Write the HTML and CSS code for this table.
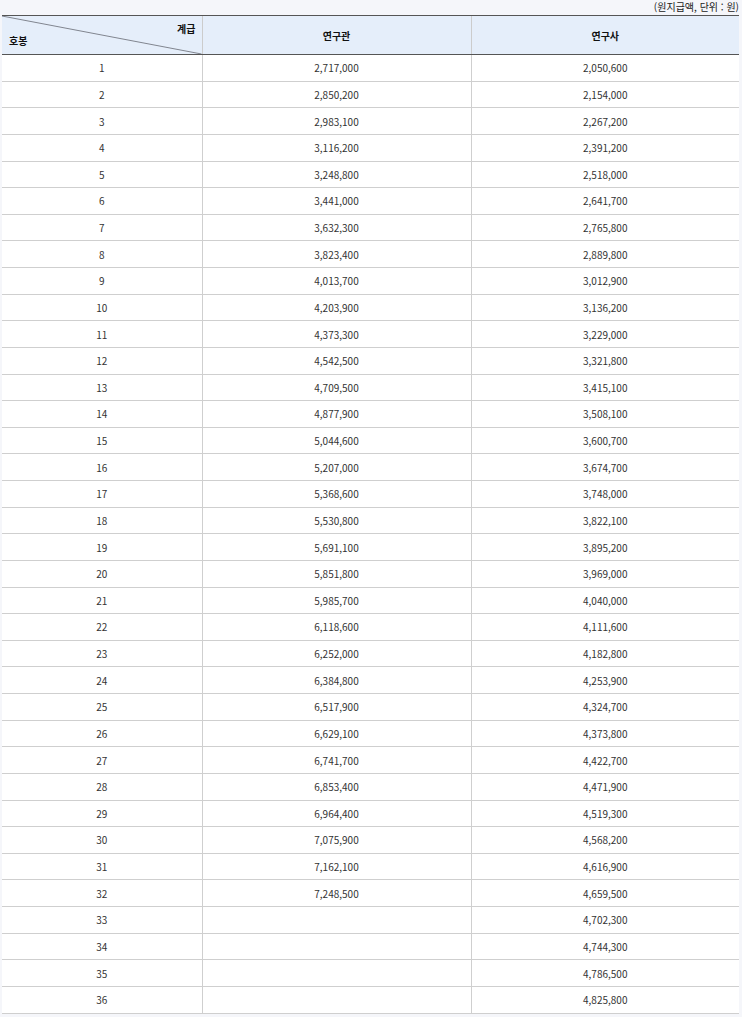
FILE: index.html
```html
<!DOCTYPE html>
<html lang="ko">
<head>
<meta charset="utf-8">
<link rel="stylesheet" href="styles.css">
</head>
<body>
<div class="wrap">
  <div class="unit">(원지급액, 단위 : 원)</div>
  <table class="pay">
    <colgroup><col class="c1"><col class="c2"><col class="c3"></colgroup>
    <thead>
      <tr>
        <th class="diag">
          <svg class="slash" viewBox="0 0 200 38" preserveAspectRatio="none" aria-hidden="true"><line x1="0" y1="0" x2="200" y2="38" stroke="#80858f" stroke-width="1" vector-effect="non-scaling-stroke"/></svg>
          <span class="top">계급</span><span class="bottom">호봉</span>
        </th>
        <th>연구관</th>
        <th>연구사</th>
      </tr>
    </thead>
    <tbody>
      <tr><td>1</td><td>2,717,000</td><td>2,050,600</td></tr>
      <tr><td>2</td><td>2,850,200</td><td>2,154,000</td></tr>
      <tr><td>3</td><td>2,983,100</td><td>2,267,200</td></tr>
      <tr><td>4</td><td>3,116,200</td><td>2,391,200</td></tr>
      <tr><td>5</td><td>3,248,800</td><td>2,518,000</td></tr>
      <tr><td>6</td><td>3,441,000</td><td>2,641,700</td></tr>
      <tr><td>7</td><td>3,632,300</td><td>2,765,800</td></tr>
      <tr><td>8</td><td>3,823,400</td><td>2,889,800</td></tr>
      <tr><td>9</td><td>4,013,700</td><td>3,012,900</td></tr>
      <tr><td>10</td><td>4,203,900</td><td>3,136,200</td></tr>
      <tr><td>11</td><td>4,373,300</td><td>3,229,000</td></tr>
      <tr><td>12</td><td>4,542,500</td><td>3,321,800</td></tr>
      <tr><td>13</td><td>4,709,500</td><td>3,415,100</td></tr>
      <tr><td>14</td><td>4,877,900</td><td>3,508,100</td></tr>
      <tr><td>15</td><td>5,044,600</td><td>3,600,700</td></tr>
      <tr><td>16</td><td>5,207,000</td><td>3,674,700</td></tr>
      <tr><td>17</td><td>5,368,600</td><td>3,748,000</td></tr>
      <tr><td>18</td><td>5,530,800</td><td>3,822,100</td></tr>
      <tr><td>19</td><td>5,691,100</td><td>3,895,200</td></tr>
      <tr><td>20</td><td>5,851,800</td><td>3,969,000</td></tr>
      <tr><td>21</td><td>5,985,700</td><td>4,040,000</td></tr>
      <tr><td>22</td><td>6,118,600</td><td>4,111,600</td></tr>
      <tr><td>23</td><td>6,252,000</td><td>4,182,800</td></tr>
      <tr><td>24</td><td>6,384,800</td><td>4,253,900</td></tr>
      <tr><td>25</td><td>6,517,900</td><td>4,324,700</td></tr>
      <tr><td>26</td><td>6,629,100</td><td>4,373,800</td></tr>
      <tr><td>27</td><td>6,741,700</td><td>4,422,700</td></tr>
      <tr><td>28</td><td>6,853,400</td><td>4,471,900</td></tr>
      <tr><td>29</td><td>6,964,400</td><td>4,519,300</td></tr>
      <tr><td>30</td><td>7,075,900</td><td>4,568,200</td></tr>
      <tr><td>31</td><td>7,162,100</td><td>4,616,900</td></tr>
      <tr><td>32</td><td>7,248,500</td><td>4,659,500</td></tr>
      <tr><td>33</td><td></td><td>4,702,300</td></tr>
      <tr><td>34</td><td></td><td>4,744,300</td></tr>
      <tr><td>35</td><td></td><td>4,786,500</td></tr>
      <tr><td>36</td><td></td><td>4,825,800</td></tr>
    </tbody>
  </table>
</div>
</body>
</html>
```
FILE: styles.css
```css
html, body {
  margin: 0;
  padding: 0;
  background: #f5f6fa;
}
.wrap {
  padding: 0 3px 0 2px;
  font-family: "Noto Sans CJK KR", "Noto Sans", sans-serif;
  color: #333;
}
.unit {
  height: 15px;
  line-height: 14px;
  text-align: right;
  font-size: 10px;
  color: #222;
}
.pay {
  width: 737px;
  border-collapse: collapse;
  table-layout: fixed;
  background: #fff;
  font-size: 10px;
}
.c1 { width: 200px; }
.c2 { width: 269px; }
.c3 { width: 268px; }
.pay thead tr {
  height: 39px;
}
.pay th {
  background: #e5eefa;
  border-top: 1px solid #555;
  border-bottom: 1px solid #555;
  border-left: 1px solid #ccc;
  font-weight: bold;
  color: #111;
  padding: 0;
  font-size: 10px;
}
.pay th:first-child { border-left: none; }
.pay th.diag {
  position: relative;
}
.slash {
  position: absolute;
  left: 0;
  top: 0;
  width: 100%;
  height: 100%;
  display: block;
}
.diag .top {
  position: absolute;
  right: 6px;
  top: 5px;
}
.diag .bottom {
  position: absolute;
  left: 7px;
  bottom: 6px;
}
.pay tbody tr {
  height: 26.64px;
}
.pay td {
  text-align: center;
  border-bottom: 1px solid #cfcfcf;
  border-left: 1px solid #cfcfcf;
  padding: 0;
  color: #333;
}
.pay td:first-child { border-left: none; }
```
